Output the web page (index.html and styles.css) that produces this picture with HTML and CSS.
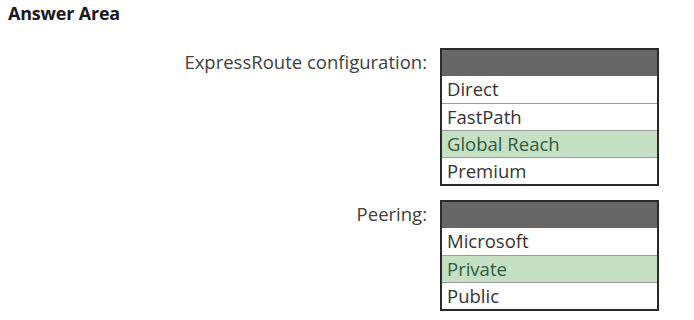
FILE: index.html
```html
<!DOCTYPE html>
<html lang="en">
<head>
    <meta charset="UTF-8">
    <title>Answer Area</title>
    <link rel="stylesheet" href="styles.css">
</head>
<body>
    <h1 class="title">Answer Area</h1>

    <div class="answer-grid">
        <div class="field-label">ExpressRoute configuration:</div>
        <div class="dropdown">
            <div class="dropdown-head"></div>
            <div class="option">Direct</div>
            <div class="option">FastPath</div>
            <div class="option selected">Global Reach</div>
            <div class="option">Premium</div>
        </div>

        <div class="field-label">Peering:</div>
        <div class="dropdown">
            <div class="dropdown-head"></div>
            <div class="option">Microsoft</div>
            <div class="option selected">Private</div>
            <div class="option">Public</div>
        </div>
    </div>
</body>
</html>
```

FILE: styles.css
```css
body {
    margin: 0;
    background: #ffffff;
    font-family: "Open Sans", "Noto Sans", sans-serif;
    color: #3d3d3d;
}

.title {
    margin: 0;
    padding: 0 0 0 8px;
    font-size: 18px;
    line-height: 26px;
    font-weight: 700;
    letter-spacing: -0.2px;
    color: #1a1a1a;
}

.answer-grid {
    display: grid;
    grid-template-columns: 427px 219px;
    column-gap: 13px;
    row-gap: 14px;
    margin-top: 22px;
}

.field-label {
    text-align: right;
    font-size: 18.5px;
    line-height: 28px;
    color: #404040;
}

.dropdown {
    border: 2px solid #2a2a2a;
    background: #ffffff;
}

.dropdown-head {
    height: 26px;
    background: #666666;
}

.option {
    height: 26px;
    line-height: 26px;
    padding-left: 5px;
    font-size: 18.5px;
    color: #333333;
    border-top: 1px solid #9a9a9a;
}

.dropdown-head + .option {
    border-top: none;
    height: 27px;
}

.option.selected {
    background: #c6e0c6;
    color: #2f5d38;
}
```
